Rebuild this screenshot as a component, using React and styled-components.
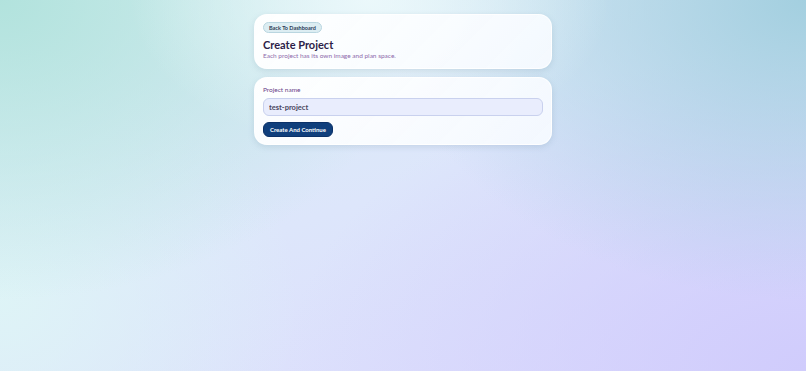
import styled, { createGlobalStyle } from 'styled-components';

const GlobalStyle = createGlobalStyle`
  html, body {
    margin: 0;
    height: 100%;
  }
  body {
    font-family: Lato, "Noto Sans", sans-serif;
    min-height: 371px;
    background:
      radial-gradient(ellipse 240px 150px at 370px 0px, rgba(236, 249, 251, 0.95), rgba(236, 249, 251, 0) 100%),
      radial-gradient(ellipse 420px 300px at 806px 0px, rgba(160, 206, 222, 0.95), rgba(160, 206, 222, 0) 100%),
      radial-gradient(ellipse 420px 300px at 0px 0px, rgba(176, 226, 220, 0.95), rgba(176, 226, 220, 0) 100%),
      radial-gradient(ellipse 300px 260px at 0px 300px, rgba(222, 245, 246, 0.9), rgba(222, 245, 246, 0) 100%),
      radial-gradient(ellipse 520px 320px at 806px 371px, rgba(208, 204, 252, 1), rgba(208, 204, 252, 0) 100%),
      linear-gradient(160deg, #d8f0f2 0%, #dde6fb 50%, #dcdafd 100%);
    background-attachment: fixed;
  }
`;

const Page = styled.div`
  display: flex;
  flex-direction: column;
  align-items: center;
  gap: 8px;
  padding-top: 14px;
`;

const Card = styled.div`
  box-sizing: border-box;
  width: 298px;
  padding: ${(p) => p.$pad};
  border-radius: 13px;
  background: linear-gradient(135deg, rgba(255, 255, 255, 0.96), rgba(246, 250, 255, 0.93));
  box-shadow: 0 2px 6px rgba(90, 120, 150, 0.18);
  border: 1px solid rgba(255, 255, 255, 0.8);
`;

const BackButton = styled.button`
  font-family: inherit;
  font-size: 5.5px;
  font-weight: 700;
  color: #2b3a55;
  background: #dcedf2;
  border: 1px solid #b9d6e0;
  border-radius: 7px;
  height: 11px;
  padding: 0 5px;
  cursor: pointer;
  display: block;
`;

const Title = styled.h1`
  margin: 5px 0 0;
  font-size: 11px;
  font-weight: 700;
  color: #2c1d48;
  line-height: 13px;
`;

const Subtitle = styled.p`
  margin: 0;
  font-size: 6.5px;
  color: #8d6aab;
  line-height: 9px;
`;

const Label = styled.label`
  display: block;
  font-size: 6.5px;
  font-weight: 400;
  color: #6a3f88;
  line-height: 9px;
`;

const Input = styled.input`
  box-sizing: border-box;
  display: block;
  width: 100%;
  height: 18px;
  margin-top: 4px;
  padding: 0 5px;
  font-family: inherit;
  font-size: 7.5px;
  font-weight: 700;
  color: #4a4760;
  background: #e9edfd;
  border: 1px solid #c9d1ee;
  border-radius: 6px;

  &:focus {
    outline: none;
  }
`;

const Submit = styled.button`
  display: block;
  margin-top: 6px;
  height: 15px;
  padding: 0 6px;
  font-family: inherit;
  font-size: 6px;
  font-weight: 700;
  color: #ffffff;
  background: #103f7c;
  border: 1px solid #0b3168;
  border-radius: 6px;
  cursor: pointer;
`;

export default function App() {
  return (
    <>
      <GlobalStyle />
      <Page>
        <Card $pad="7px 8px 8px">
          <BackButton>Back To Dashboard</BackButton>
          <Title>Create Project</Title>
          <Subtitle>Each project has its own image and plan space.</Subtitle>
        </Card>
        <Card $pad="7px 8px 7px">
          <Label>Project name</Label>
          <Input defaultValue="test-project" />
          <Submit>Create And Continue</Submit>
        </Card>
      </Page>
    </>
  );
}
